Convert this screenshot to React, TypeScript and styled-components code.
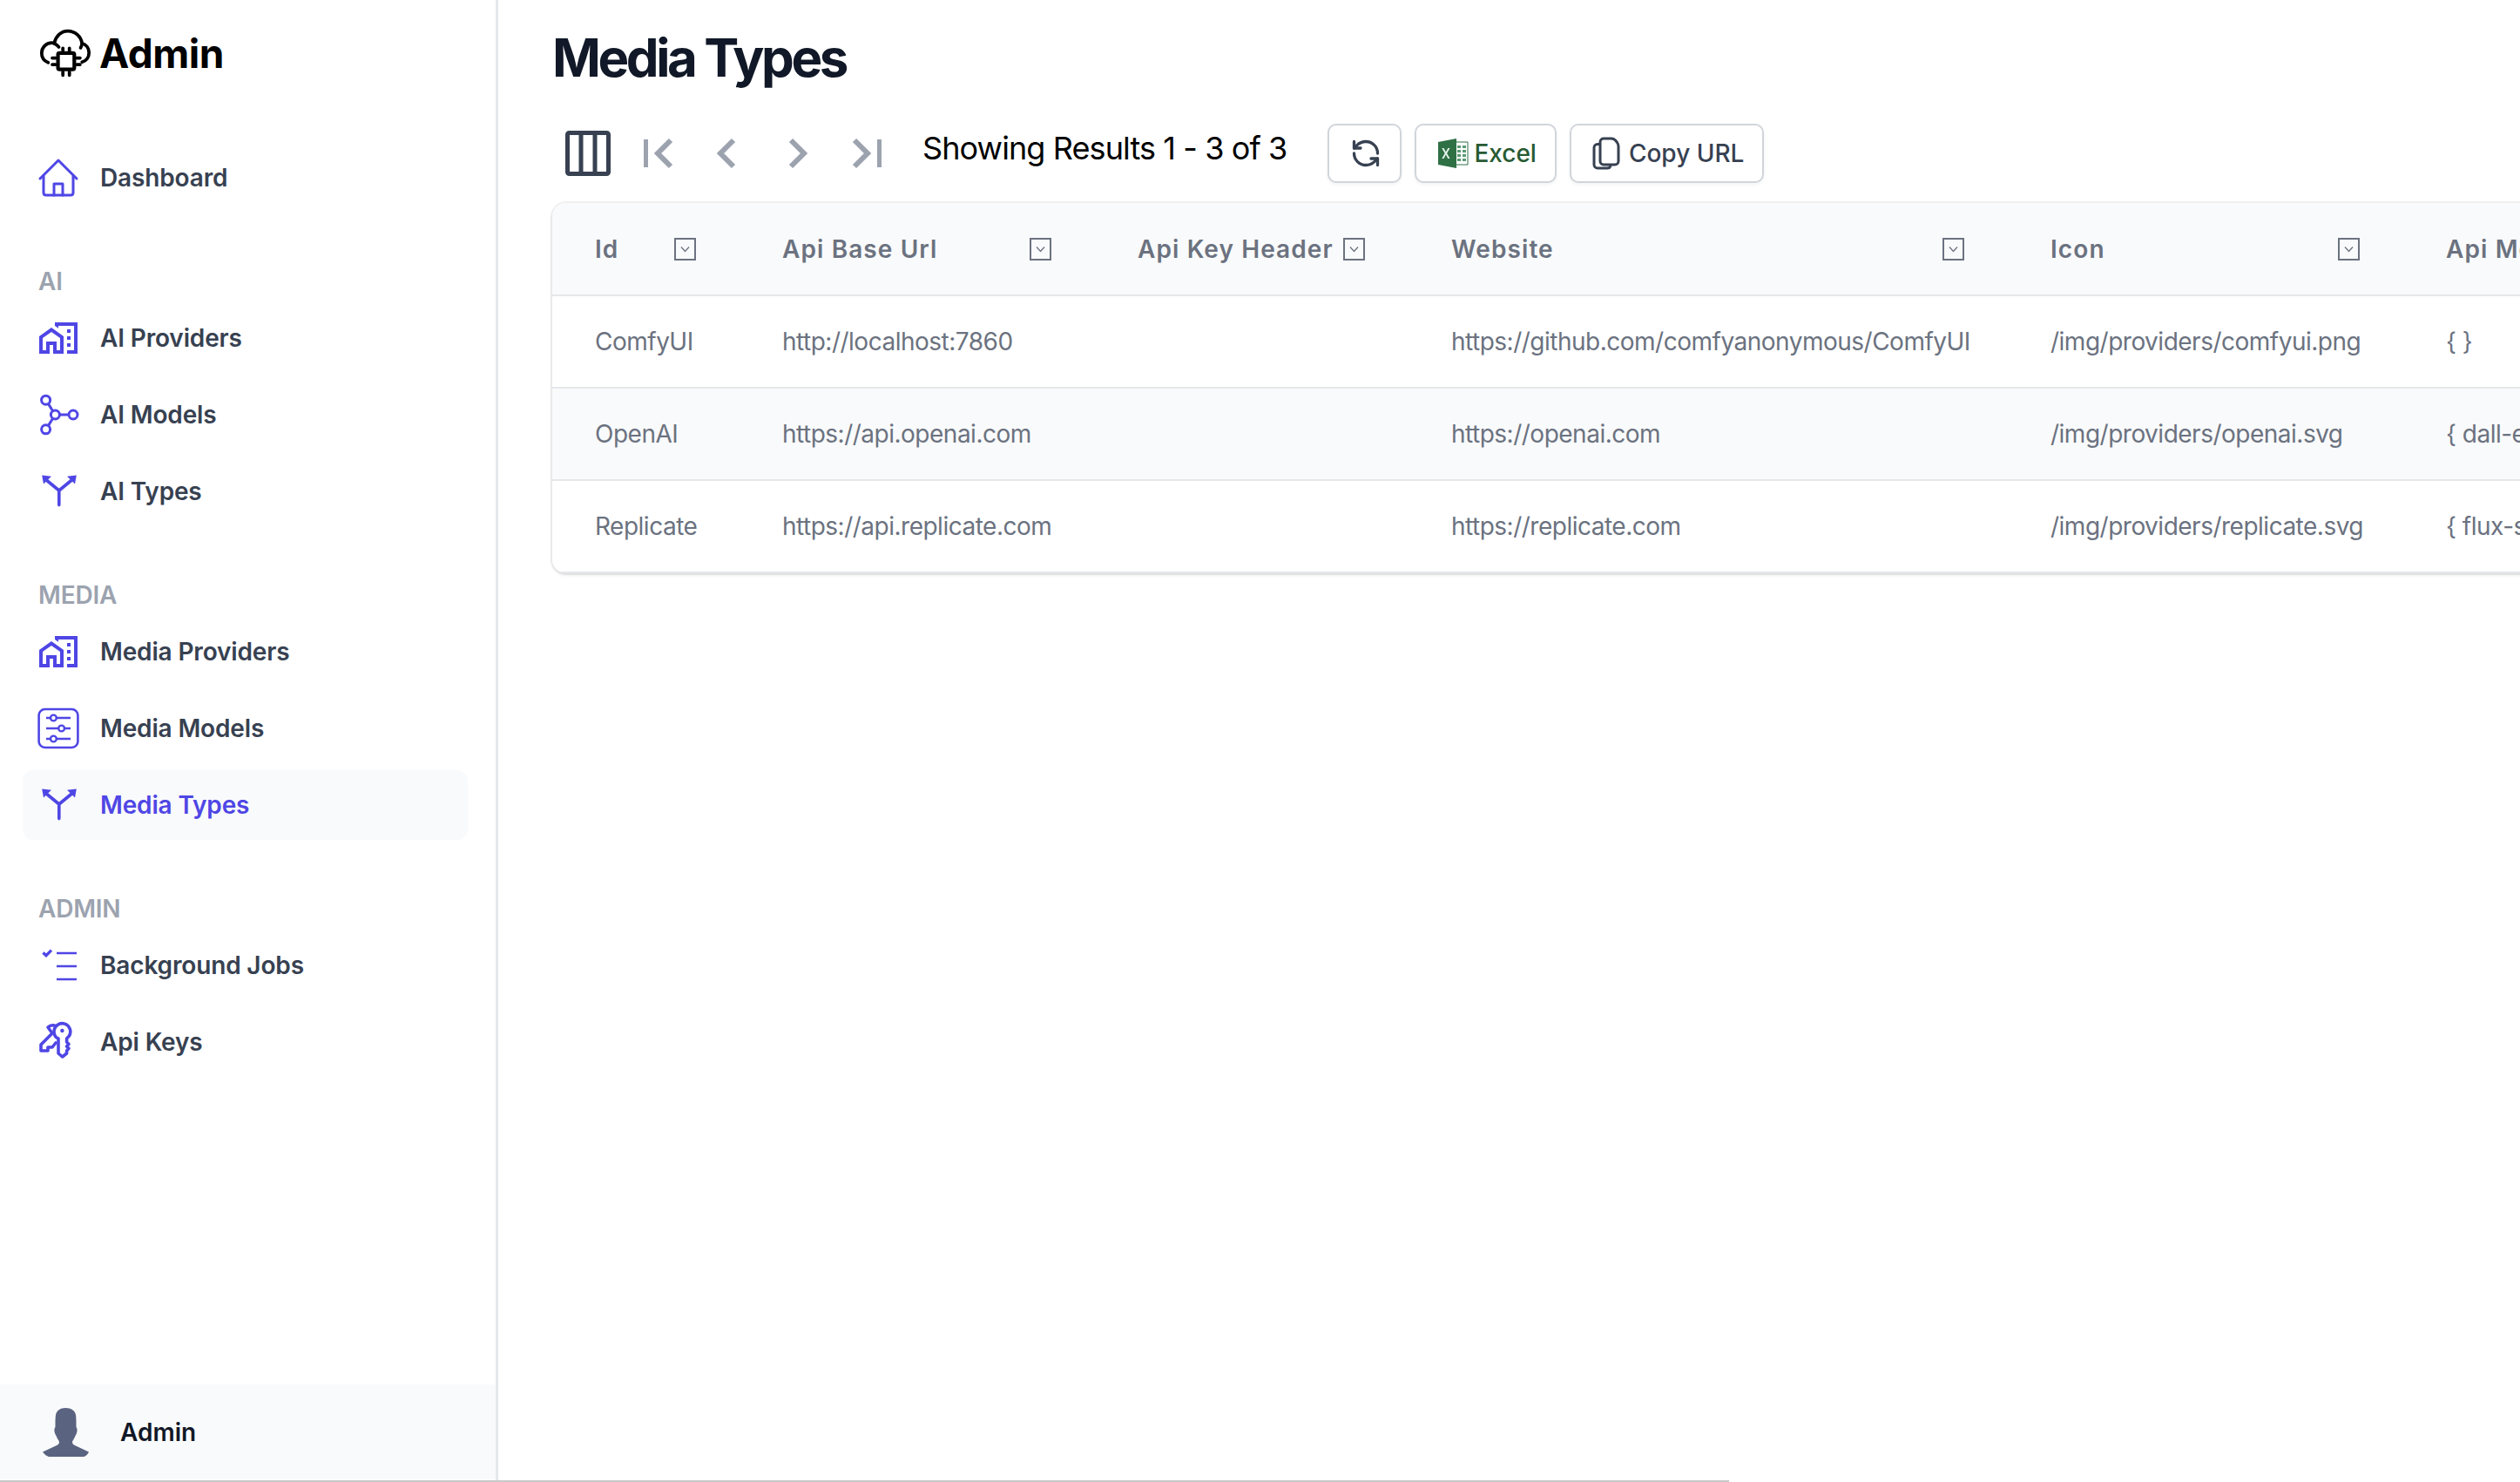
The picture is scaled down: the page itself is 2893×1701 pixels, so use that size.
import { ReactNode } from 'react';
import styled, { createGlobalStyle } from 'styled-components';

const GlobalStyle = createGlobalStyle`
  * {
    box-sizing: border-box;
  }

  html,
  body {
    margin: 0;
    height: 100%;
    background: #fff;
    font-family: Inter, 'Noto Sans', sans-serif;
    overflow: hidden;
  }
`;

const LogoIcon = () => (
  <svg width="60" height="60" viewBox="0 0 64 64" fill="none" stroke="#000" strokeWidth="4" strokeLinecap="round" strokeLinejoin="round">
    <path d="M11 44.500C6 42.500 3 38 3 33c0-7 5.500-12.500 12.500-12.500 1 0 2 .1 3 .4C20.500 12 27 6 35 6c9 0 16 6.500 17.500 15 5 1.500 8.500 6 8.500 11.500 0 5.500-3.500 10-8.500 11.500" />
    <path d="M18 21c2.500 1 4.500 2.500 6 4.500M52.500 21c-.2 2-.8 4-1.800 5.500" />
    <rect x="23" y="33" width="20" height="20" rx="2" strokeWidth="4.500" />
    <path d="M29 27v3M37 27v3M29 56v4M37 56v4M16 39h4M16 47h4M46 39h4M46 47h4" strokeWidth="4" />
  </svg>
);

const HomeIcon = () => (
  <svg width="48" height="48" viewBox="0 0 24 24" fill="none" stroke="#4f46e5" strokeWidth="1.500" strokeLinecap="round" strokeLinejoin="round">
    <path d="M1.500 12.500 12 2l10.500 10.500" />
    <path d="M3.500 11v9.500c0 1 .6 1.500 1.500 1.500h14c1 0 1.500-.5 1.500-1.500V11" />
    <path d="M9.500 22v-6.500h5V22" />
  </svg>
);

const HomeWorkIcon = () => (
  <svg width="48" height="48" viewBox="0 0 24 24" fill="#4f46e5">
    <path d="M17 7h2v2h-2zm0 4h2v2h-2zm0 4h2v2h-2zM1 11v10h6v-5h2v5h6V11L8 6zm12 8h-2v-5H5v5H3v-7l5-3.500l5 3.500zM10 3v1.970l2 1.430V5h9v14h-4v2h6V3z" />
  </svg>
);

const GraphIcon = () => (
  <svg width="48" height="48" viewBox="0 0 24 24" fill="none" stroke="#4f46e5" strokeWidth="1.500">
    <circle cx="4.800" cy="3.600" r="2.500" />
    <circle cx="10.200" cy="12" r="2.500" />
    <circle cx="20.500" cy="12" r="2.500" />
    <circle cx="4.800" cy="20.400" r="2.500" />
    <path d="M6.200 5.700 8.800 9.900M6.200 18.300l2.600-4.200M12.700 12H18" />
  </svg>
);

const SplitIcon = () => (
  <svg width="48" height="48" viewBox="0 0 24 24" fill="#4f46e5">
    <path d="M12.400 19.800V11.500L4.500 5M12.400 11.500 20.300 5" fill="none" stroke="#4f46e5" strokeWidth="1.800" strokeLinecap="round" strokeLinejoin="round" />
    <path d="M2.600 2.800 8 3.400 3.500 7.800zM22.400 2.800 17 3.400l4.500 4.400z" />
  </svg>
);

const SlidersIcon = () => (
  <svg width="48" height="48" viewBox="0 0 24 24" fill="none" stroke="#4f46e5" strokeWidth="1.200">
    <rect x="0.800" y="1" width="22.400" height="22" rx="3.500" strokeWidth="1.300" />
    <path d="M5 6h2.500M11 6h8M5 12h7M15.500 12H19M5 18h2.500M11 18h8" />
    <circle cx="9.200" cy="6" r="1.700" />
    <circle cx="13.800" cy="12" r="1.700" />
    <circle cx="9.200" cy="18" r="1.700" />
  </svg>
);

const ChecklistIcon = () => (
  <svg width="48" height="48" viewBox="0 0 24 24" fill="none" stroke="#4f46e5" strokeWidth="1.300">
    <path d="M11 5h11.500M11 12.500h11.500M11 20h11.500" />
    <path d="M3.200 4.700 5 6.300 8 3.300" strokeWidth="1.700" />
  </svg>
);

const KeysIcon = () => (
  <svg width="48" height="48" viewBox="0 0 24 24" fill="none" stroke="#4f46e5" strokeWidth="1.800" strokeLinecap="round" strokeLinejoin="round">
    <path d="M9.500 6a4.700 4.700 0 1 1 8.500 2.800L16.800 10v2l1.200 1.200-1.200 1.300 1.200 1.200-1.200 1.300v1.500l-2.500 2-2.300-2v-8.500C10.500 9.500 9.500 8 9.500 6z" />
    <path d="M9.800 2.500C8.500 2.200 7 2.600 6 3.500L8.500 7 2 13.500V17h4v-2h2.500l2-2.500" />
    <circle cx="14.200" cy="5.500" r="1.100" fill="#4f46e5" stroke="none" />
  </svg>
);

const AvatarIcon = () => (
  <svg width="54" height="56" viewBox="0 0 54 56" fill="#5a6380">
    <path d="M27 0c7 0 11 3 12 8 .6 4 .5 9 .5 14 2 2 1 7-1 10-1 3-3 5-3.500 7 0 2 1 3 3 4l16 7.500c-2 4-4 5-6 5.500H8c-2-.5-5-2.500-7-5.500L17 43c2-1 3-2 3-4-.5-2-2.500-4-3.500-7-2-3-3-8-1-10 0-5-.1-10 .5-14 1-5 5-8 11-8z" />
  </svg>
);

const ColumnsIcon = () => (
  <svg width="52" height="52" viewBox="0 0 52 52" fill="none" stroke="#374151" strokeWidth="5">
    <rect x="2.500" y="2.500" width="47" height="47" rx="2" />
    <path d="M18 3v46M34 3v46" />
  </svg>
);

const ChevronSvg = ({ points, bar }: { points: string; bar?: number }) => (
  <svg width="40" height="40" viewBox="0 0 40 40" fill="none" stroke="#9ca3af">
    <polyline points={points} strokeWidth="6" />
    {bar !== undefined && <rect x={bar} y="4" width="5" height="32" fill="#9ca3af" stroke="none" />}
  </svg>
);

const RefreshIcon = () => (
  <svg width="36" height="36" viewBox="0 0 24 24" fill="none" stroke="#374151" strokeWidth="2.200" strokeLinecap="round" strokeLinejoin="round">
    <path d="M21 12a9 9 0 0 0-9-9 9.750 9.750 0 0 0-6.740 2.740L3 8" />
    <path d="M3 3v5h5" />
    <path d="M3 12a9 9 0 0 0 9 9 9.750 9.750 0 0 0 6.740-2.740L21 16" />
    <path d="M16 16h5v5" />
  </svg>
);

const ExcelIcon = () => (
  <svg width="36" height="36" viewBox="0 0 36 36">
    <path d="M21 5h14v26H21z" fill="#fff" stroke="#2f7045" strokeWidth="1" />
    <path d="M23 9h4v3h-4zm6 0h4v3h-4zM23 14h4v3h-4zm6 0h4v3h-4zM23 19h4v3h-4zm6 0h4v3h-4zM23 24h4v3h-4zm6 0h4v3h-4z" fill="#5b9a73" />
    <path d="M1 5 22 1v34L1 31z" fill="#2f7045" />
    <path d="m7.500 12 2.400 4.400 2.400-4.400h2.200l-3.400 6 3.400 6h-2.200l-2.400-4.400L7.500 24H5.300l3.400-6-3.400-6z" fill="#e8f3ec" />
  </svg>
);

const CopyIcon = () => (
  <svg width="32" height="38" viewBox="0 0 32 38" fill="none" stroke="#374151" strokeWidth="3" strokeLinejoin="round">
    <path d="M9 28V6c0-2.500 2-4 4-4h9c2 0 3 .5 4.500 2l2 2.500c1 1.500 1.500 2.500 1.500 4.500v17c0 2.500-2 4-4 4H13c-2.500 0-4-2-4-4z" />
    <path d="M9 8.500H6c-2.500 0-4 2-4 4V32c0 2.500 2 4 4 4h11c2.500 0 4-1.500 4-4" />
  </svg>
);

const FilterIcon = () => (
  <svg width="25" height="26" viewBox="0 0 25 26" fill="none" stroke="#6b7280">
    <rect x="1" y="1" width="23" height="24" strokeWidth="2" />
    <path d="M8 10.500 12.500 15.500 17 10.500" strokeWidth="1.300" />
  </svg>
);

interface NavEntry {
  label: string;
  icon: ReactNode;
  active?: boolean;
}

const navGroups: { title?: string; items: NavEntry[] }[] = [
  { items: [{ label: 'Dashboard', icon: <HomeIcon /> }] },
  {
    title: 'AI',
    items: [
      { label: 'AI Providers', icon: <HomeWorkIcon /> },
      { label: 'AI Models', icon: <GraphIcon /> },
      { label: 'AI Types', icon: <SplitIcon /> },
    ],
  },
  {
    title: 'MEDIA',
    items: [
      { label: 'Media Providers', icon: <HomeWorkIcon /> },
      { label: 'Media Models', icon: <SlidersIcon /> },
      { label: 'Media Types', icon: <SplitIcon />, active: true },
    ],
  },
  {
    title: 'ADMIN',
    items: [
      { label: 'Background Jobs', icon: <ChecklistIcon /> },
      { label: 'Api Keys', icon: <KeysIcon /> },
    ],
  },
];

const columns = [
  { label: 'Id', width: 215, field: 'id' },
  { label: 'Api Base Url', width: 408, field: 'url' },
  { label: 'Api Key Header', width: 360, field: 'header' },
  { label: 'Website', width: 688, field: 'website' },
  { label: 'Icon', width: 454, field: 'icon' },
  { label: 'Api Models', width: 500, field: 'models' },
];

const rows: Record<string, string>[] = [
  {
    id: 'ComfyUI',
    url: 'http://localhost:7860',
    header: '',
    website: 'https://github.com/comfyanonymous/ComfyUI',
    icon: '/img/providers/comfyui.png',
    models: '{ }',
  },
  {
    id: 'OpenAI',
    url: 'https://api.openai.com',
    header: '',
    website: 'https://openai.com',
    icon: '/img/providers/openai.svg',
    models: '{ dall-e-3 }',
  },
  {
    id: 'Replicate',
    url: 'https://api.replicate.com',
    header: '',
    website: 'https://replicate.com',
    icon: '/img/providers/replicate.svg',
    models: '{ flux-schnell }',
  },
];

function App() {
  return (
    <Page>
      <GlobalStyle />
      <Sidebar>
        <Brand>
          <LogoIcon />
          <BrandName>Admin</BrandName>
        </Brand>
        <Nav>
          {navGroups.map((group, i) => (
            <NavGroup key={i}>
              {group.title && <GroupTitle>{group.title}</GroupTitle>}
              <NavList>
                {group.items.map((item) => (
                  <NavItem key={item.label} $active={item.active}>
                    <NavIcon>{item.icon}</NavIcon>
                    {item.label}
                  </NavItem>
                ))}
              </NavList>
            </NavGroup>
          ))}
        </Nav>
        <UserBar>
          <AvatarIcon />
          <UserName>Admin</UserName>
        </UserBar>
      </Sidebar>

      <Main>
        <Title>Media Types</Title>
        <Toolbar>
          <ColumnsButton>
            <ColumnsIcon />
          </ColumnsButton>
          <Pager>
            <ChevronSvg points="35,5 20,20 35,35" bar={4} />
            <ChevronSvg points="27,5 12,20 27,35" />
            <ChevronSvg points="13,5 28,20 13,35" />
            <ChevronSvg points="6,5 21,20 6,35" bar={32} />
          </Pager>
          <ResultCount>Showing Results 1 - 3 of 3</ResultCount>
          <Actions>
            <ToolButton>
              <RefreshIcon />
            </ToolButton>
            <ToolButton $color="#285a33" $gap={6}>
              <ExcelIcon />
              Excel
            </ToolButton>
            <ToolButton>
              <CopyIcon />
              Copy URL
            </ToolButton>
          </Actions>
        </Toolbar>

        <TableCard>
          <DataTable>
            <colgroup>
              {columns.map((c) => (
                <col key={c.field} width={c.width} />
              ))}
            </colgroup>
            <thead>
              <tr>
                {columns.map((c) => (
                  <HeadCell key={c.field}>
                    <HeadInner>
                      <span>{c.label}</span>
                      {c.field !== 'models' && <FilterIcon />}
                    </HeadInner>
                  </HeadCell>
                ))}
              </tr>
            </thead>
            <tbody>
              {rows.map((row, i) => (
                <BodyRow key={row.id} $alt={i % 2 === 1}>
                  {columns.map((c) => (
                    <BodyCell key={c.field}>{row[c.field]}</BodyCell>
                  ))}
                </BodyRow>
              ))}
            </tbody>
          </DataTable>
        </TableCard>
      </Main>
      <ScrollThumb />
    </Page>
  );
}

export default App;

const Page = styled.div`
  display: flex;
  width: 100vw;
  height: 100vh;
  overflow: hidden;
`;

const Sidebar = styled.aside`
  flex: 0 0 572px;
  display: flex;
  flex-direction: column;
  border-right: 3px solid #e5e7eb;
`;

const Brand = styled.div`
  height: 164px;
  padding: 30px 0 0 45px;
  display: flex;
  align-items: flex-start;
  gap: 9px;
`;

const BrandName = styled.span`
  font-size: 46px;
  font-weight: 700;
  line-height: 62px;
  letter-spacing: -0.5px;
  color: #000;
`;

const Nav = styled.nav`
  flex: 1;
  padding: 0 32px 0 26px;
  display: flex;
  flex-direction: column;
  gap: 59px;
`;

const NavGroup = styled.div``;

const GroupTitle = styled.div`
  height: 40px;
  line-height: 40px;
  margin-bottom: 5px;
  font-size: 28px;
  font-weight: 600;
  letter-spacing: -0.2px;
  color: #9ca3af;
  padding-left: 18px;
`;

const NavList = styled.div`
  display: flex;
  flex-direction: column;
  gap: 8px;
`;

const NavItem = styled.div<{ $active?: boolean }>`
  height: 80px;
  padding-left: 17px;
  display: flex;
  align-items: center;
  gap: 24px;
  border-radius: 12px;
  font-size: 28px;
  font-weight: 600;
  letter-spacing: -0.15px;
  color: ${(p) => (p.$active ? '#4f46e5' : '#374151')};
  background: ${(p) => (p.$active ? '#f9fafb' : 'transparent')};
`;

const NavIcon = styled.span`
  display: flex;
  width: 48px;
  height: 48px;
`;

const UserBar = styled.div`
  height: 109px;
  margin-bottom: 3px;
  padding-left: 48px;
  display: flex;
  align-items: center;
  gap: 36px;
  background: #f9fafb;
`;

const UserName = styled.span`
  font-size: 28px;
  font-weight: 600;
  color: #111827;
`;

const Main = styled.main`
  flex: 1;
  min-width: 0;
  overflow: hidden;
  padding: 30px 0 0 62px;
`;

const Title = styled.h1`
  margin: 0;
  font-size: 60px;
  line-height: 72px;
  font-weight: 700;
  letter-spacing: -3.4px;
  color: #111827;
`;

const Toolbar = styled.div`
  margin-top: 40px;
  height: 68px;
  display: flex;
  align-items: center;
  padding-left: 15px;
`;

const ColumnsButton = styled.div`
  display: flex;
  margin-right: 34px;
`;

const Pager = styled.div`
  display: flex;
  gap: 40px;
`;

const ResultCount = styled.div`
  margin-left: 44px;
  padding-bottom: 12px;
  font-size: 36px;
  font-weight: 400;
  letter-spacing: -0.9px;
  color: #000;
  white-space: nowrap;
`;

const Actions = styled.div`
  margin-left: 47px;
  display: flex;
  gap: 15px;
`;

const ToolButton = styled.div<{ $color?: string; $gap?: number }>`
  height: 68px;
  padding: 0 21px 0 24px;
  display: flex;
  align-items: center;
  gap: ${(p) => p.$gap ?? 10}px;
  background: #fff;
  border: 2px solid #d1d5db;
  border-radius: 10px;
  box-shadow: 0 2px 4px rgba(0, 0, 0, 0.05);
  font-size: 28px;
  font-weight: 500;
  color: ${(p) => p.$color ?? '#374151'};
  white-space: nowrap;
`;

const TableCard = styled.div`
  margin-top: 23px;
  width: 2625px;
  border-radius: 16px;
  overflow: hidden;
  box-shadow: 0 0 0 2px rgba(0, 0, 0, 0.05), 0 2px 4px rgba(0, 0, 0, 0.1);
`;

const DataTable = styled.table`
  width: 100%;
  table-layout: fixed;
  border-collapse: collapse;
`;

const HeadCell = styled.th`
  height: 106px;
  padding: 0 50px 0 49px;
  background: #f9fafb;
  border-bottom: 2px solid #e5e7eb;
  text-align: left;
  font-size: 28px;
  font-weight: 600;
  letter-spacing: 1.1px;
  color: #6b7280;
  white-space: nowrap;
`;

const HeadInner = styled.div`
  display: flex;
  align-items: center;
  justify-content: space-between;
`;

const BodyRow = styled.tr<{ $alt?: boolean }>`
  background: ${(p) => (p.$alt ? '#f9fafb' : '#fff')};
`;

const BodyCell = styled.td`
  height: 106px;
  padding: 0 0 0 49px;
  border-bottom: 2px solid #e5e7eb;
  font-size: 28px;
  font-weight: 400;
  letter-spacing: -0.5px;
  color: #6b7280;
  white-space: nowrap;
`;

const ScrollThumb = styled.div`
  position: fixed;
  left: 0;
  bottom: 0;
  width: 1985px;
  height: 2px;
  background: #c8c8c8;
`;
